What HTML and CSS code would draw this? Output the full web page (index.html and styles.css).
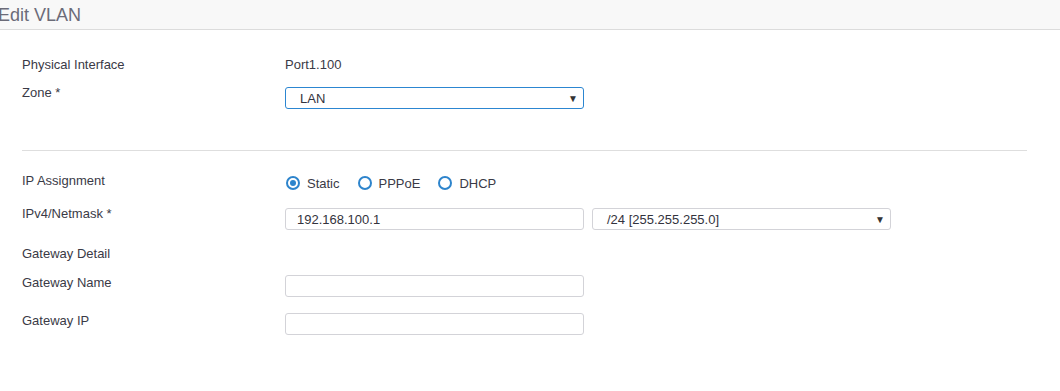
FILE: index.html
```html
<!DOCTYPE html>
<html>
<head>
<meta charset="utf-8">
<link rel="stylesheet" href="styles.css">
</head>
<body>
<div class="header"><span class="title">Edit VLAN</span></div>
<div class="form">
  <div class="section first">
    <div class="row text">
      <div class="label">Physical Interface</div>
      <div class="value">Port1.100</div>
    </div>
    <div class="row field">
      <div class="label">Zone *</div>
      <div class="select focus"><span>LAN</span><span class="arrow">▼</span></div>
    </div>
  </div>
  <div class="section second">
    <div class="row radios-row">
      <div class="label">IP Assignment</div>
      <div class="radios">
        <label class="radio"><span class="dot checked"></span>Static</label>
        <label class="radio"><span class="dot"></span>PPPoE</label>
        <label class="radio"><span class="dot"></span>DHCP</label>
      </div>
    </div>
    <div class="row field">
      <div class="label">IPv4/Netmask *</div>
      <div class="controls">
        <div class="input"><span>192.168.100.1</span></div>
        <div class="select"><span>/24 [255.255.255.0]</span><span class="arrow">▼</span></div>
      </div>
    </div>
    <div class="row text gw">
      <div class="label">Gateway Detail</div>
    </div>
    <div class="row field tight">
      <div class="label">Gateway Name</div>
      <div class="input"></div>
    </div>
    <div class="row field tight">
      <div class="label">Gateway IP</div>
      <div class="input"></div>
    </div>
  </div>
</div>
</body>
</html>
```
FILE: styles.css
```css
html, body {
  margin: 0;
  padding: 0;
  background: #ffffff;
}
body {
  font-family: "Liberation Sans", Arial, sans-serif;
  font-size: 13px;
  color: #3a3a46;
  width: 1060px;
  height: 391px;
  overflow: hidden;
}
.header {
  height: 29px;
  background: #f8f8f8;
  border-bottom: 1px solid #dcdcdc;
  display: flex;
  align-items: center;
  overflow: hidden;
}
.title {
  font-size: 18px;
  color: #6b6b78;
  margin-left: -2px;
  line-height: 22px;
}
.form {
  padding: 0 33px 0 22px;
}
.section.first {
  padding-top: 27px;
  padding-bottom: 25px;
  border-bottom: 1px solid #dedede;
}
.section.second {
  padding-top: 22px;
}
.row {
  display: flex;
  align-items: flex-start;
}
.label {
  width: 263px;
  flex: none;
  line-height: 16px;
}
.value {
  line-height: 16px;
}
.row.text {
  margin-bottom: 12px;
}
.row.gw {
  margin-bottom: 13px;
}
.row.field {
  margin-bottom: 16px;
}
.row.field > .select,
.row.field > .input,
.row.field > .controls {
  margin-top: 2px;
}
.row.field.tight > .input {
  margin-top: 0;
}
.controls {
  display: flex;
  gap: 8px;
}
.select, .input {
  box-sizing: border-box;
  width: 299px;
  height: 22px;
  border: 1px solid #d3d3d8;
  border-radius: 3px;
  display: flex;
  align-items: center;
  justify-content: space-between;
  background: #fff;
  color: #33333d;
}
.select {
  padding: 0 5px 0 14px;
}
.input {
  padding: 0 11px;
}
.select.focus {
  border-color: #2c86d1;
}
.arrow {
  font-size: 10px;
  color: #333;
}
.radios-row {
  margin-bottom: 15px;
}
.radios {
  display: flex;
  align-items: center;
  height: 16px;
  margin-top: 2px;
}
.radio {
  display: flex;
  align-items: center;
  margin-right: 17px;
}
.dot {
  box-sizing: border-box;
  width: 14px;
  height: 14px;
  border: 2px solid #2d84cc;
  border-radius: 50%;
  margin-left: 1px;
  margin-right: 7px;
  display: flex;
  align-items: center;
  justify-content: center;
}
.dot.checked::after {
  content: "";
  width: 6px;
  height: 6px;
  border-radius: 50%;
  background: #2d84cc;
}
```
